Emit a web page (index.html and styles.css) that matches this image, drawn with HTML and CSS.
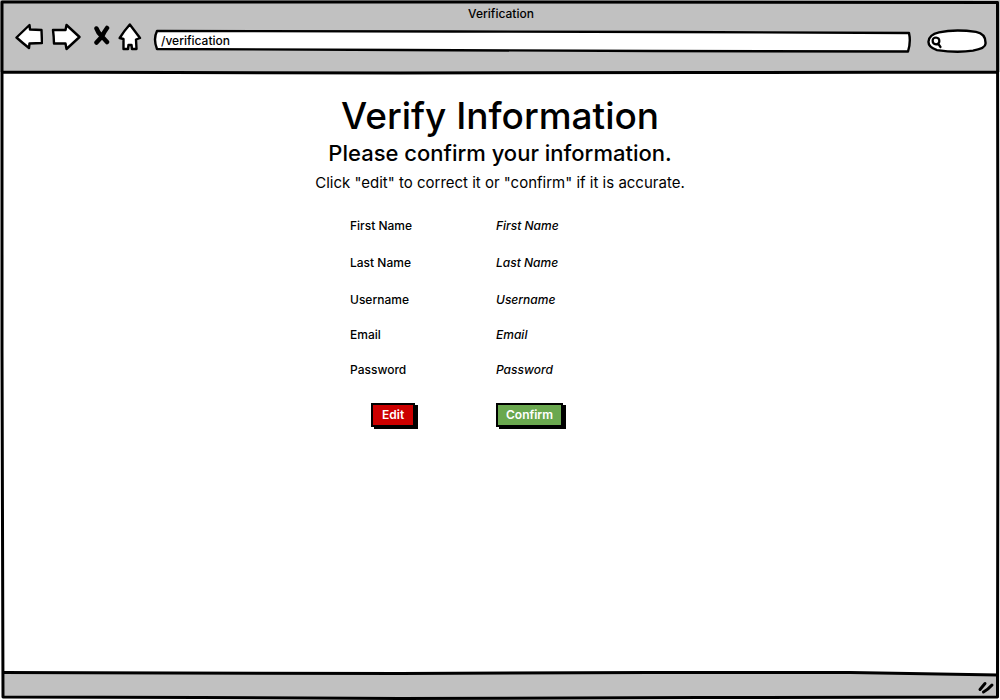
FILE: index.html
```html
<!DOCTYPE html>
<html lang="en">
<head>
<meta charset="utf-8">
<meta name="viewport" content="width=device-width, initial-scale=1">
<title>Verification</title>
<link rel="stylesheet" href="styles.css">
</head>
<body>
<div class="window">
  <header class="chrome">
    <div class="window-title">Verification</div>
    <div class="toolbar">
      <nav class="nav" aria-label="Browser">
        <button class="icon-button" type="button" aria-label="Back">
          <svg width="28" height="28" viewBox="0 0 28 28"><path class="outline" d="M1.500 14.500L14.500 2L15 6.500L26.500 7L27 20L14.500 20.500L14 25Q7 19.500 1.500 14.500Z"/></svg>
        </button>
        <button class="icon-button" type="button" aria-label="Forward">
          <svg width="30" height="28" viewBox="0 0 30 28"><path class="outline" d="M2 7L14.500 7L15.500 2L28.500 14L15.500 26L14.500 20.500L3 20.500Q2.800 13 2 7Z"/></svg>
        </button>
        <button class="icon-button" type="button" aria-label="Stop">
          <svg width="21" height="28" viewBox="-4 0 21 28"><path class="cross" d="M3.500 5.500Q5 10 9 13.500L14 19M14 5Q11 9 9 13.500L3.500 19.500"/></svg>
        </button>
        <button class="icon-button" type="button" aria-label="Home">
          <svg width="24" height="28" viewBox="0 0 24 28"><path class="outline" d="M11.800 1.500L22 15L18 16.500L18.500 26H14L13.500 22H10.500L10 26H5.500V16L1.700 15Q6 8 11.800 1.500Z"/></svg>
        </button>
      </nav>
      <label class="address">
        <svg class="shape" viewBox="0 0 760 24" preserveAspectRatio="none"><path class="outline" d="M4 2L300 2.500L520 3L757 4Q759 13 756 22.500L500 22L250 21L4 20Q0 10 4 2Z"/></svg>
        <input class="address-input" type="text" value="/verification" aria-label="Address">
      </label>
      <label class="search">
        <svg class="shape" viewBox="0 0 60 25" preserveAspectRatio="none"><path class="outline" d="M12 3.500Q28 0 49 3Q59 5 58.500 15Q59 20 46 22.500Q30 25 10 22Q1 19 1.500 13Q2 6 12 3.500Z"/></svg>
        <svg class="lens" width="14" height="14" viewBox="0 0 14 14"><path class="lens-line" d="M6 2.500C1.500 2.500 1.500 9 6 9.300C10.500 9 10.500 2.800 6 2.500ZM8 8.500L10.500 12"/></svg>
        <input class="search-input" type="text" aria-label="Search">
      </label>
    </div>
  </header>

  <main class="page">
    <h1 class="title">Verify Information</h1>
    <p class="subtitle">Please confirm your information.</p>
    <p class="hint">Click "edit" to correct it or "confirm" if it is accurate.</p>
    <dl class="details">
      <dt>First Name</dt><dd>First Name</dd>
      <dt>Last Name</dt><dd>Last Name</dd>
      <dt>Username</dt><dd>Username</dd>
      <dt>Email</dt><dd>Email</dd>
      <dt>Password</dt><dd>Password</dd>
    </dl>
    <div class="actions">
      <div class="action-edit"><button class="button edit" type="button">Edit</button></div>
      <div><button class="button confirm" type="button">Confirm</button></div>
    </div>
  </main>

  <footer class="statusbar">
    <svg class="shape" viewBox="0 0 1000 30" preserveAspectRatio="none"><path class="bar-fill" d="M2 2.500L400 3.500L650 2.500L850 2.500L998 5V28H2Z"/><path class="bar-line" d="M2 2.500L400 3.500L650 2.500L850 2.500L998 5"/></svg>
    <svg class="grip" width="18" height="15" viewBox="0 0 18 15"><path class="grip-line" d="M3 9.500L8 3.500M6.500 12Q11 9.500 15 5"/></svg>
  </footer>
  <svg class="frame" viewBox="0 0 1000 700" preserveAspectRatio="none"><path class="frame-line" d="M2 2L500 2L997.500 2.500L998 350L997.500 697L700 697.500L400 698.500L200 697.500L3 697L2 350ZM3 72L400 73L700 72.500L998 72"/></svg>
</div>
</body>
</html>
```
FILE: styles.css
```css
* {
  box-sizing: border-box;
}

body {
  margin: 0;
  background: #fff;
  color: #000;
  font-family: Inter, "Liberation Sans", sans-serif;
  font-size: 12px;
  font-weight: 500;
  line-height: 16px;
}

.window {
  position: relative;
  display: flex;
  flex-direction: column;
  min-height: 100vh;
}

.chrome {
  height: 72px;
  padding: 6px 13px 0 15px;
  background: #c1c1c1;
}

.window-title {
  text-align: center;
}

.toolbar {
  display: flex;
  align-items: center;
  gap: 15px;
  height: 30px;
}

.nav {
  display: flex;
  align-items: center;
  gap: 8px;
  margin-right: -4px;
}

.icon-button {
  display: flex;
  padding: 0;
  border: 0;
  background: none;
}

.outline {
  fill: #fff;
  stroke: #000;
  stroke-width: 2.4;
  stroke-linejoin: round;
  vector-effect: non-scaling-stroke;
}

.cross {
  fill: none;
  stroke: #000;
  stroke-width: 4.5;
  stroke-linecap: round;
}

.address,
.search {
  position: relative;
  display: flex;
  height: 24px;
  margin-top: 8px;
}

.address {
  flex: 1;
}

.search {
  width: 60px;
}

.shape {
  position: absolute;
  inset: 0;
  width: 100%;
  height: 100%;
}

.address-input,
.search-input {
  position: relative;
  width: 100%;
  height: 22px;
  border: 0;
  outline: 0;
  background: none;
  color: inherit;
  font: inherit;
}

.address-input {
  padding: 0 8px;
}

.search-input {
  padding: 0 8px 0 20px;
}

.lens {
  position: absolute;
  top: 6px;
  left: 3px;
}

.lens-line {
  fill: none;
  stroke: #000;
  stroke-width: 2.2;
  stroke-linecap: round;
}

.page {
  display: flex;
  flex: 1;
  flex-direction: column;
  align-items: center;
  padding: 20px 16px;
}

.title,
.subtitle,
.hint {
  margin: 0;
  font-weight: 500;
  text-align: center;
}

.title {
  font-size: 37px;
  line-height: 48px;
}

.subtitle {
  font-size: 22px;
  line-height: 26px;
}

.hint {
  font-size: 15px;
  font-weight: 400;
  line-height: 34px;
}

.details,
.actions {
  display: grid;
  grid-template-columns: 146px 1fr;
  width: 300px;
  max-width: 100%;
}

.details {
  grid-template-rows: 37px 37px 35px 35px 41px;
  margin: 18px 0 0;
}

.details dd {
  margin: 0;
  font-style: italic;
}

.action-edit {
  padding-left: 21px;
}

.button {
  height: 24px;
  padding: 0 8px;
  border: 2px solid #000;
  box-shadow: 3px 2px 0 #000;
  color: #fff;
  font: inherit;
  font-weight: 600;
}

.edit {
  padding: 0 9px;
  background: #c00;
}

.confirm {
  background: #6aa84f;
}

.statusbar {
  position: relative;
  display: flex;
  justify-content: flex-end;
  height: 30px;
  padding: 10px 5px 0;
}

.bar-fill {
  fill: #c1c1c1;
}

.bar-line {
  fill: none;
  stroke: #000;
  stroke-width: 3;
  vector-effect: non-scaling-stroke;
}

.grip {
  position: relative;
}

.grip-line {
  fill: none;
  stroke: #000;
  stroke-width: 3;
  stroke-linecap: round;
}

.frame {
  position: absolute;
  inset: 0;
  width: 100%;
  height: 100%;
  pointer-events: none;
}

.frame-line {
  fill: none;
  stroke: #000;
  stroke-width: 3;
  stroke-linejoin: round;
  vector-effect: non-scaling-stroke;
}
```
